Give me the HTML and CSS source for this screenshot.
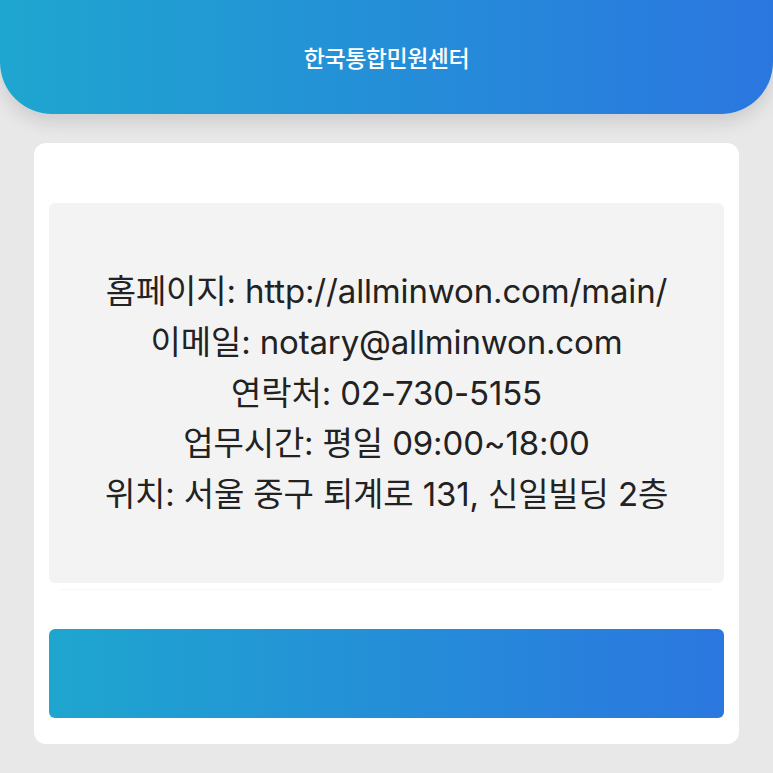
FILE: index.html
```html
<!DOCTYPE html>
<html lang="ko">
<head>
<meta charset="utf-8">
<link rel="stylesheet" href="styles.css">
</head>
<body>
<header class="top">
  <h1 class="title">한국통합민원센터</h1>
</header>
<main class="card">
  <section class="info">
    <p>홈페이지: http://allminwon.com/main/</p>
    <p>이메일: notary@allminwon.com</p>
    <p>연락처: 02-730-5155</p>
    <p>업무시간: 평일 09:00~18:00</p>
    <p>위치: 서울 중구 퇴계로 131, 신일빌딩 2층</p>
  </section>
  <div class="divider"></div>
  <button class="action" type="button"></button>
</main>
</body>
</html>
```
FILE: styles.css
```css
* { box-sizing: border-box; }
html, body { margin: 0; padding: 0; }
body {
  background: #e8e8e8;
  font-family: Inter, "Noto Sans CJK KR", sans-serif;
  color: #222;
  width: 773px;
  height: 773px;
  overflow: hidden;
}
.top {
  height: 114px;
  background: linear-gradient(90deg, #1ea6cf 0%, #2b77e0 100%);
  border-radius: 0 0 52px 52px;
  box-shadow: 0 8px 18px rgba(0,0,0,0.12);
  display: flex;
  align-items: center;
  justify-content: center;
}
.title {
  margin: 0;
  color: #fff;
  font-size: 23px;
  font-weight: 500;
  letter-spacing: -0.5px;
}
.card {
  margin: 29px 34px 0 34px;
  height: 601px;
  background: #fff;
  border-radius: 12px;
  padding: 60px 15px 26px 15px;
  display: flex;
  flex-direction: column;
}
.info {
  height: 380px;
  background: #f3f3f3;
  border-radius: 6px;
  display: flex;
  flex-direction: column;
  justify-content: center;
  align-items: center;
}
.info p {
  margin: 0;
  font-size: 33px;
  line-height: 50.7px;
  color: #222;
  letter-spacing: -0.15px;
  white-space: nowrap;
}
.divider {
  height: 1px;
  margin: 6px 10px 0;
  background: #f8f8f8;
}
.action {
  margin-top: 39px;
  height: 89px;
  border: none;
  border-radius: 6px;
  background: linear-gradient(90deg, #1ea6cf 0%, #2b77e0 100%);
  padding: 0;
}
```
